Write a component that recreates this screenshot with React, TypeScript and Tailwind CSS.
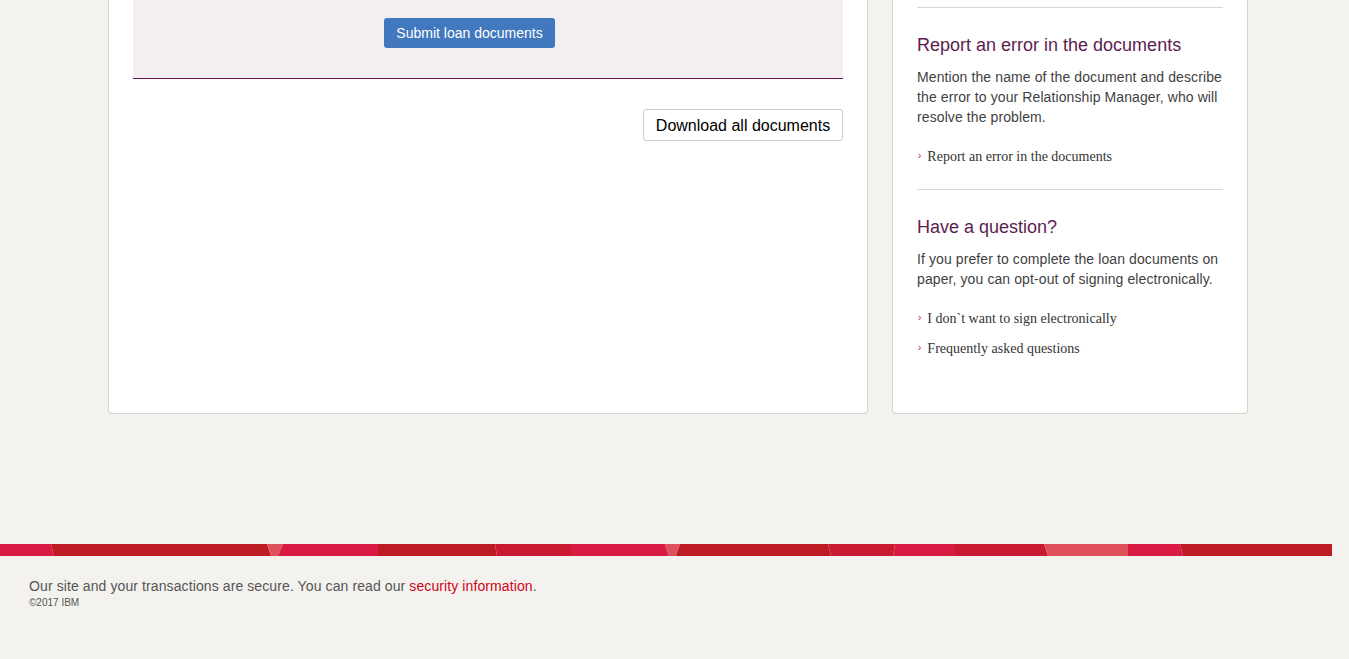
const stripe: { pts: string; fill: string }[] = [
  { pts: "0,0 51,0 54,12 0,12", fill: "#d91b44" },
  { pts: "51,0 267,0 271,12 54,12", fill: "#bd1b24" },
  { pts: "267,0 283,0 278,12 271,12", fill: "#e0505a" },
  { pts: "283,0 378,0 378,12 278,12", fill: "#d91b44" },
  { pts: "378,0 495,0 497,12 378,12", fill: "#bd1b24" },
  { pts: "495,0 571,0 571,12 497,12", fill: "#c91a31" },
  { pts: "571,0 665,0 669,12 571,12", fill: "#d91b44" },
  { pts: "665,0 680,0 676,12 669,12", fill: "#e0505a" },
  { pts: "680,0 828,0 831,12 676,12", fill: "#bd1b24" },
  { pts: "828,0 895,0 893,12 831,12", fill: "#c91a31" },
  { pts: "895,0 955,0 955,12 893,12", fill: "#d91b44" },
  { pts: "955,0 1044,0 1048,12 955,12", fill: "#c91a31" },
  { pts: "1044,0 1128,0 1128,12 1048,12", fill: "#e0505a" },
  { pts: "1128,0 1180,0 1183,12 1128,12", fill: "#d91b44" },
  { pts: "1180,0 1332,0 1332,12 1183,12", fill: "#bd1b24" },
];

function SideLink({ children }: { children: string }) {
  return (
    <li className="flex h-[30px] items-center">
      <span className="ml-px mr-[6px] text-[10px] leading-none text-[#d0103a]">›</span>
      <a href="#" className="font-['Liberation_Serif',serif] text-[14px] text-[#333]">
        {children}
      </a>
    </li>
  );
}

function SideSection({ title, text, links }: { title: string; text: string; links: string[] }) {
  return (
    <div>
      <div className="h-px bg-[#d6d6d6]" />
      <h2 className="mt-[24px] text-[18px] leading-[26px] text-[#5c1d4f]">{title}</h2>
      <p className="mt-[9px] text-[14px] leading-[20px] tracking-[0.1px] text-[#3f3f3f]">{text}</p>
      <ul className="mt-[14px]">
        {links.map((l) => (
          <SideLink key={l}>{l}</SideLink>
        ))}
      </ul>
    </div>
  );
}

export default function App() {
  return (
    <div className="min-h-[659px] bg-[#f3f2ee] font-['Liberation_Sans',Arial,sans-serif]">
      <div className="ml-[108px] flex items-start gap-[24px]">
        <div className="h-[414px] w-[760px] rounded-b-[4px] border-x border-b border-[#d7d4cd] bg-white px-[24px]">
          <div className="h-[79px] border-b border-[#6b1450] bg-[#f2eef2] pt-[18px]">
            <button className="ml-[251px] h-[30px] w-[171px] rounded-[3px] bg-[#4178be] text-[14px] text-white">
              Submit loan documents
            </button>
          </div>
          <div className="mt-[30px] flex justify-end">
            <button className="h-[32px] w-[200px] rounded-[3px] border border-[#ccc] bg-white pt-px text-[16px] text-black">
              Download all documents
            </button>
          </div>
        </div>

        <div className="h-[414px] w-[356px] rounded-b-[4px] border-x border-b border-[#d7d4cd] bg-white px-[24px] pt-[7px]">
          <SideSection
            title="Report an error in the documents"
            text="Mention the name of the document and describe the error to your Relationship Manager, who will resolve the problem."
            links={["Report an error in the documents"]}
          />
          <div className="mt-[18px]">
            <SideSection
              title="Have a question?"
              text="If you prefer to complete the loan documents on paper, you can opt-out of signing electronically."
              links={["I don`t want to sign electronically", "Frequently asked questions"]}
            />
          </div>
        </div>
      </div>

      <footer className="mt-[130px]">
        <svg width="1332" height="12" viewBox="0 0 1332 12" className="block">
          {stripe.map((s, i) => (
            <polygon key={i} points={s.pts} fill={s.fill} />
          ))}
        </svg>
        <div className="px-[29px] pt-[20px]">
          <p className="text-[14px] leading-[20px] tracking-[0.1px] text-[#555]">
            Our site and your transactions are secure. You can read our{" "}
            <a href="#" className="text-[#d0021b]">
              security information
            </a>
            .
          </p>
          <p className="pt-px text-[10px] leading-[12px] text-[#555]">©2017 IBM</p>
        </div>
      </footer>
    </div>
  );
}
